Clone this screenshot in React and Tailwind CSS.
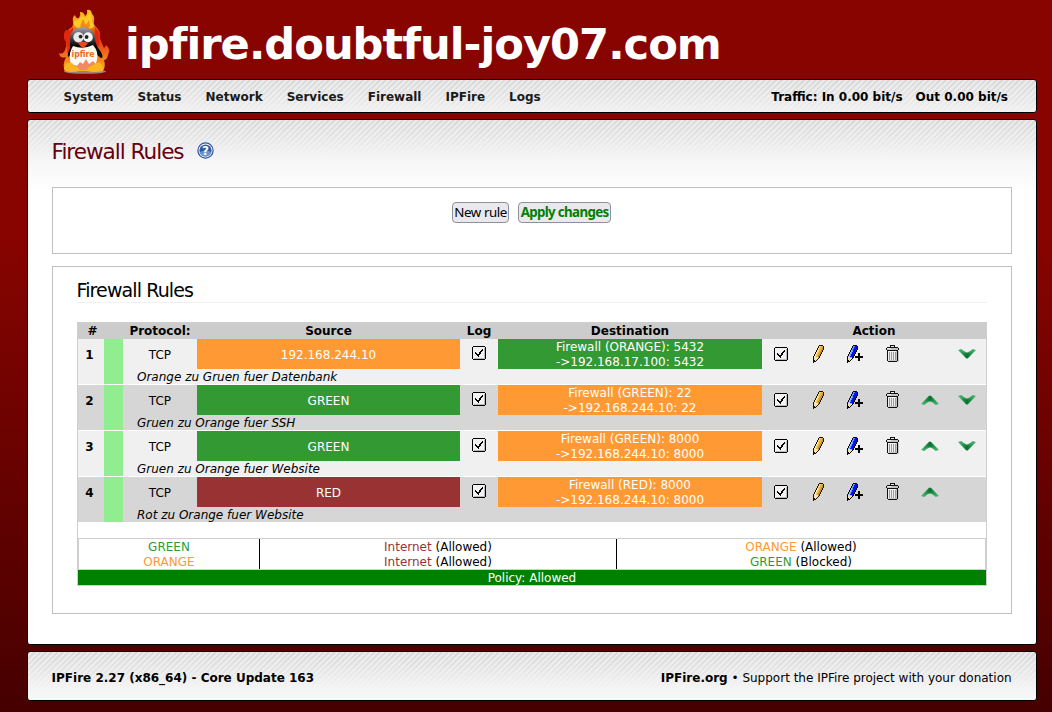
import React from "react";

const PENCIL = [
  "......####.",
  ".....#yyYY#",
  ".....#yYYo#",
  "....#yyYYo#",
  "....#yYYoo#",
  "...#lyYYo#.",
  "...#lyYoo#.",
  "..#lyYYo#..",
  "..#lyYoo#..",
  ".#lyYYo#...",
  ".#lyYoo#...",
  "#llYYo#....",
  "#wwllo#....",
  "#wwww#.....",
  "#www#......",
  "##w#.......",
  "###........",
  "#..........",
];

const TRASH = [
  "....#####....",
  "....#www#....",
  ".###########.",
  "#wwwwggggggg#",
  "#ggggggggggg#",
  ".###########.",
  ".#wwwwwwwwg#s",
  ".#wdwdwdwdg#s",
  ".#wdwdwdwdg#s",
  ".#wdwdwdwdg#s",
  ".#wdwdwdwdg#s",
  ".#wdwdwdwdg#s",
  ".#wdwdwdwdg#s",
  ".#wdwdwdwdg#s",
  ".#wdwdwdwdg#s",
  ".#wgggggggg#s",
  "..#########ss",
];

const CHECK = [
  ".############.",
  "#wwwwwwwwwwww#",
  "#wwwwwwwwwwwg#",
  "#wwwwwwwwwkwg#",
  "#wwwwwwwwkkwg#",
  "#wwwwwwwkkwwg#",
  "#wwkwwwkkwwwg#",
  "#wwkkwwkkwwwg#",
  "#wwwkkkkwwwwg#",
  "#wwwwkkwwwwwg#",
  "#wwwwwkwwwwwg#",
  "#wwwwwwwwwwwg#",
  "#wggggggggggg#",
  ".############.",
];

const GOLD = { "#": "#1a1408", y: "#fbd670", Y: "#e8b23e", o: "#c98e22", l: "#fdeaa8", w: "#fbe3ad" };
const BLUE = { "#": "#05050f", y: "#5f9cf0", Y: "#0a12ff", o: "#0a0fd0", l: "#8fc4f5", w: "#f6dfa6" };
const GREY = { "#": "#111111", w: "#f1f1f1", g: "#c4c4c4", d: "#9a9a9a", s: "#cbcbcb" };
const BOX = { "#": "#000000", w: "#f2f2f4", g: "#b9b9bd", k: "#000000" };

function Pixels({ map, colors, width, height, children }) {
  return (
    <svg width={width} height={height} viewBox={`0 0 ${width} ${height}`} shapeRendering="crispEdges" className="block">
      {map.flatMap((row, y) =>
        [...row].map((c, x) => (c === "." ? null : <rect key={`${x}-${y}`} x={x} y={y} width="1" height="1" fill={colors[c]} />))
      )}
      {children}
    </svg>
  );
}

const Check = () => <Pixels map={CHECK} colors={BOX} width={14} height={14} />;
const Pencil = () => <Pixels map={PENCIL} colors={GOLD} width={11} height={18} />;
const Trash = () => <Pixels map={TRASH} colors={GREY} width={13} height={17} />;
const PencilAdd = () => (
  <Pixels map={PENCIL} colors={BLUE} width={16} height={18}>
    <path d="M11 8h2v3h3v2h-3v3h-2v-3h-3v-2h3z" fill="#000" />
  </Pixels>
);

function Chevron({ down }) {
  return (
    <svg width="18" height="10" viewBox="0 0 18 10" className={down ? "block rotate-180" : "block"}>
      <defs>
        <linearGradient id="chev" x1="0" x2="1" y1="0" y2="0">
          <stop offset="0" stopColor="#55c07a" />
          <stop offset=".5" stopColor="#06702e" />
          <stop offset="1" stopColor="#55c07a" />
        </linearGradient>
      </defs>
      <path d="M0 9 L7.8 0.9 Q9 -0.1 10.2 0.9 L18 9 L14.6 9.7 Q12 7 9 6.3 Q6 7 3.4 9.7 Z" fill="url(#chev)" />
      <path d="M0.8 9 Q6 5.8 9 5.4 Q12 5.8 17.2 9 L14.6 9.7 Q12 7 9 6.3 Q6 7 3.4 9.7 Z" fill="#3fb268" opacity=".6" />
    </svg>
  );
}

function Help() {
  return (
    <svg width="17" height="17" viewBox="0 0 17 17" className="block">
      <circle cx="8.5" cy="8.5" r="7.6" fill="#fff" stroke="#2c549b" strokeWidth="1.2" />
      <circle cx="8.5" cy="8.5" r="6.1" fill="#2f5a9f" />
      <path d="M2.6 10 A6.1 6.1 0 0 0 14.4 10 Q9 7.5 2.6 10Z" fill="#6d94cc" />
      <text x="8.5" y="12.8" textAnchor="middle" fontSize="12" fontWeight="bold" fontFamily="DejaVu Sans" fill="#fff">?</text>
    </svg>
  );
}

function Logo() {
  return (
    <svg width="52" height="66" viewBox="0 0 52 66" className="block">
      <defs>
        <linearGradient id="fl" x1="0" x2="0" y1="0" y2="1">
          <stop offset="0" stopColor="#f9c81f" />
          <stop offset=".22" stopColor="#f7941d" />
          <stop offset=".42" stopColor="#e8330f" />
          <stop offset=".62" stopColor="#f0541a" />
          <stop offset="1" stopColor="#f9b21e" />
        </linearGradient>
        <linearGradient id="hd" x1="0" x2="0" y1="0" y2="1">
          <stop offset="0" stopColor="#a5a5a5" />
          <stop offset=".3" stopColor="#555" />
          <stop offset=".6" stopColor="#0a0a0a" />
        </linearGradient>
      </defs>
      <ellipse cx="26" cy="62.6" rx="21" ry="2.2" fill="#a08078" />
      <path d="M14 13 Q13 8 16 6 Q17 10 20 9 Q22 6 21 3 Q25 3 26 7 Q29 5 28 1 Q32 0 33 5 Q36 8 35 12 Q34 15 37 18 Q42 22 41 29 Q42 32 44 37 Q45 41 47 36 Q52 40 49 46 Q48 51 45 51 Q47 57 44 62 L6 62 Q3 56 7 48 Q1 50 0 44 Q4 46 6 41 Q8 37 7 33 Q3 27 7 21 Q8 24 10 20 Q15 18 14 13Z" fill="url(#fl)" />
      <path d="M15 12 Q18 12 20 10 L23 7 L26 9 L29 6 L31 3 Q33 8 33 12 L35 17 Q32 22 29 18 L25 15 L20 19 Q14 19 15 12Z" fill="#fbcb22" />
      <path d="M21 17 L24 10 L27 16 L30 11 L31 18Z" fill="#f58a1e" />
      <path d="M7 21 Q11 23 14 18 L14 33 L8 45 Q9 38 7 33 Q3 27 7 21Z M36 18 Q42 24 40 38 L36 34Z" fill="#e62710" />
      <path d="M11 30 Q11 19 23.5 18 Q36 19 36 30 Q37 37 42 43 Q45 49 42 49 L38 46 L12 46 L9 48 Q8 45 11 39 Q11 35 11 30Z" fill="url(#hd)" />
      <path d="M14 37 Q24 41 34 36 Q40 43 38 51 Q36 61 25 61 Q12 61 11 51 Q10 43 14 37Z" fill="#fdf8f0" />
      <path d="M13 61 Q14 54 18 57 L21 53 L24 55 L27 50 L30 55 L34 52 Q38 55 37 61Z" fill="#f08a64" />
      <ellipse cx="19.5" cy="28.3" rx="5.2" ry="5.2" fill="#e8e8e8" />
      <ellipse cx="29" cy="28.3" rx="4.8" ry="5" fill="#f4f4f4" />
      <circle cx="21.6" cy="27.6" r="1.9" fill="#222" />
      <circle cx="27.6" cy="28" r="1.9" fill="#222" />
      <path d="M19 34 Q24 31 29 34 Q27 37 24 39.5 Q21 37 19 34Z" fill="#f0461e" />
      <path d="M5 60 Q6 53 10 54 Q13 53 16 57 Q22 60 20 62 Q13 64 6 62Z M44 60 Q42 52 38 54 L32 57 Q27 60 28 62 Q36 64 44 62Z" fill="#fbb522" />
      <text x="12.5" y="47.5" fontSize="8" fontWeight="bold" fontFamily="DejaVu Sans" fill="#ee6a1c" textLength="23" lengthAdjust="spacingAndGlyphs">ipfire</text>
    </svg>
  );
}

const PANEL =
  "rounded-[3px] border border-black bg-white bg-no-repeat bg-[linear-gradient(to_bottom,rgba(240,240,240,0)_0px,rgba(243,243,243,0.6)_22px,#f5f5f5_38px,#fff_72px),repeating-linear-gradient(135deg,#d8d8d8_0px,#d8d8d8_1.5px,#ebebeb_2.4px,#ebebeb_4px)]";

const RULES = [
  { n: 1, src: "192.168.244.10", srcBg: "bg-[#ff9933]", d1: "Firewall (ORANGE): 5432", d2: "->192.168.17.100: 5432", dstBg: "bg-[#339933]", note: "Orange zu Gruen fuer Datenbank", down: true },
  { n: 2, src: "GREEN", srcBg: "bg-[#339933]", d1: "Firewall (GREEN): 22", d2: "->192.168.244.10: 22", dstBg: "bg-[#ff9933]", note: "Gruen zu Orange fuer SSH", up: true, down: true },
  { n: 3, src: "GREEN", srcBg: "bg-[#339933]", d1: "Firewall (GREEN): 8000", d2: "->192.168.244.10: 8000", dstBg: "bg-[#ff9933]", note: "Gruen zu Orange fuer Website", up: true, down: true },
  { n: 4, src: "RED", srcBg: "bg-[#993333]", d1: "Firewall (RED): 8000", d2: "->192.168.244.10: 8000", dstBg: "bg-[#ff9933]", note: "Rot zu Orange fuer Website", up: true },
];

const COLS = "grid grid-cols-[26px_19px_74px_263px_38px_264px_224px]";

function Rule({ r, i }) {
  return (
    <div className={`${COLS} grid-rows-[30px_15px] h-[45px] leading-[15px] ${i % 2 ? "bg-[#d6d6d6]" : "bg-[#f0f0f0]"}`}>
      <div className="flex items-center justify-center pr-[3px] pt-[3px] font-bold">{r.n}</div>
      <div className="row-span-2 bg-[#90ee90]" />
      <div className="flex items-center justify-center pt-[3px]">TCP</div>
      <div className={`flex items-center justify-center pt-[3px] text-white ${r.srcBg}`}>{r.src}</div>
      <div className="flex justify-center pt-[7px]"><Check /></div>
      <div className={`h-[30px] pt-px text-center text-white ${r.dstBg}`}>
        <div>{r.d1}</div>
        <div>{r.d2}</div>
      </div>
      <div className="grid grid-cols-6 items-center justify-items-center">
        <Check />
        <div className="pl-px"><Pencil /></div>
        <PencilAdd />
        <div className="pb-[2px]"><Trash /></div>
        <div>{r.up && <Chevron />}</div>
        <div>{r.down && <Chevron down />}</div>
      </div>
      <div />
      <div className="col-span-5 pl-[14px] pt-px italic">{r.note}</div>
    </div>
  );
}

export default function App() {
  return (
    <div className="flex h-[712px] w-[1052px] flex-col overflow-hidden whitespace-nowrap bg-[linear-gradient(to_bottom,#880400_0px,#880400_230px,#460000_712px)] pl-[26.6px] pr-[15.4px] font-['DejaVu_Sans',sans-serif] text-[12px] leading-[15px] text-black">
      <header className="flex h-[79px] shrink-0 items-start pl-8 pt-[9px]">
        <Logo />
        <h1 className="ml-[14.4px] mt-[9px] text-[43.2px] font-bold leading-[52px] tracking-[-1px] text-white">ipfire.doubtful-joy07.com</h1>
      </header>

      <nav className={`flex h-[34px] shrink-0 items-center justify-between pl-[36px] pr-[27.6px] pt-[2px] font-bold ${PANEL}`}>
        <div className="flex gap-6 text-[#1a1a1a]">
          <span>System</span>
          <span>Status</span>
          <span>Network</span>
          <span>Services</span>
          <span>Firewall</span>
          <span>IPFire</span>
          <span>Logs</span>
        </div>
        <div className="flex gap-[13px]">
          <span>Traffic: In 0.00 bit/s</span>
          <span>Out 0.00 bit/s</span>
        </div>
      </nav>

      <main className={`mt-[6px] h-[526px] shrink-0 px-6 ${PANEL}`}>
        <div className="flex h-[67px] items-start">
          <h2 className="mt-[19px] text-[21.6px] leading-[26px] tracking-[-1.04px] text-[#66000f]">Firewall Rules</h2>
          <div className="ml-[13px] mt-[22px]"><Help /></div>
        </div>

        <section className="flex h-[67px] items-start justify-center gap-[9px] border border-[#c0c0c0] bg-white pt-[14px] font-['Noto_Sans',sans-serif] text-black">
          <button className="flex h-[21px] w-[57px] items-center justify-center rounded-[4px] border border-[#8f8f9d] bg-[#e9e9ed] text-[13.333px] tracking-[-0.4px]">New rule</button>
          <button className="flex h-[21px] w-[93px] items-center justify-center rounded-[4px] border border-[#8f8f9d] bg-[#e9e9ed] text-[13.333px] font-bold tracking-[-0.65px] text-[#008000]">Apply changes</button>
        </section>

        <section className="mt-3 h-[348px] border border-[#c0c0c0] bg-white px-6">
          <h3 className="mb-[19px] h-9 border-b border-[#f0f0f0] pt-[11px] text-[19px] leading-[24px] tracking-[-0.9px]">Firewall Rules</h3>
          <div className="ml-[0.4px] w-[910px] border border-[#cfcfcf]">
            <div className={`${COLS} h-4 bg-[#cccccc] pt-px text-center font-bold`}>
              <span className="pl-[3px]">#</span>
              <span />
              <span>Protocol:</span>
              <span>Source</span>
              <span>Log</span>
              <span>Destination</span>
              <span>Action</span>
            </div>
            <div className="flex flex-col gap-px">
              {RULES.map((r, i) => (
                <Rule key={r.n} r={r} i={i} />
              ))}
            </div>
            <div className="mt-4 grid h-8 grid-cols-[181px_357px_1fr] grid-rows-[30px] border border-[#cfcfcf] text-center">
              <div className="border-r border-black pt-px text-[#339933]">
                <div>GREEN</div>
                <div className="text-[#ff9933]">ORANGE</div>
              </div>
              <div className="border-r border-black pt-px">
                <div><span className="text-[#993333]">Internet</span> (Allowed)</div>
                <div><span className="text-[#993333]">Internet</span> (Allowed)</div>
              </div>
              <div className="pt-px">
                <div><span className="text-[#ff9933]">ORANGE</span> (Allowed)</div>
                <div><span className="text-[#339933]">GREEN</span> (Blocked)</div>
              </div>
            </div>
            <div className="h-[15px] bg-[#008000] pt-px text-center text-white">Policy: Allowed</div>
          </div>
        </section>
      </main>

      <footer className={`mt-[6px] flex h-[50px] shrink-0 items-center justify-between px-6 pt-[5px] ${PANEL}`}>
        <span className="font-bold">IPFire 2.27 (x86_64) - Core Update 163</span>
        <span><b>IPFire.org</b> • Support the IPFire project with your donation</span>
      </footer>
    </div>
  );
}
